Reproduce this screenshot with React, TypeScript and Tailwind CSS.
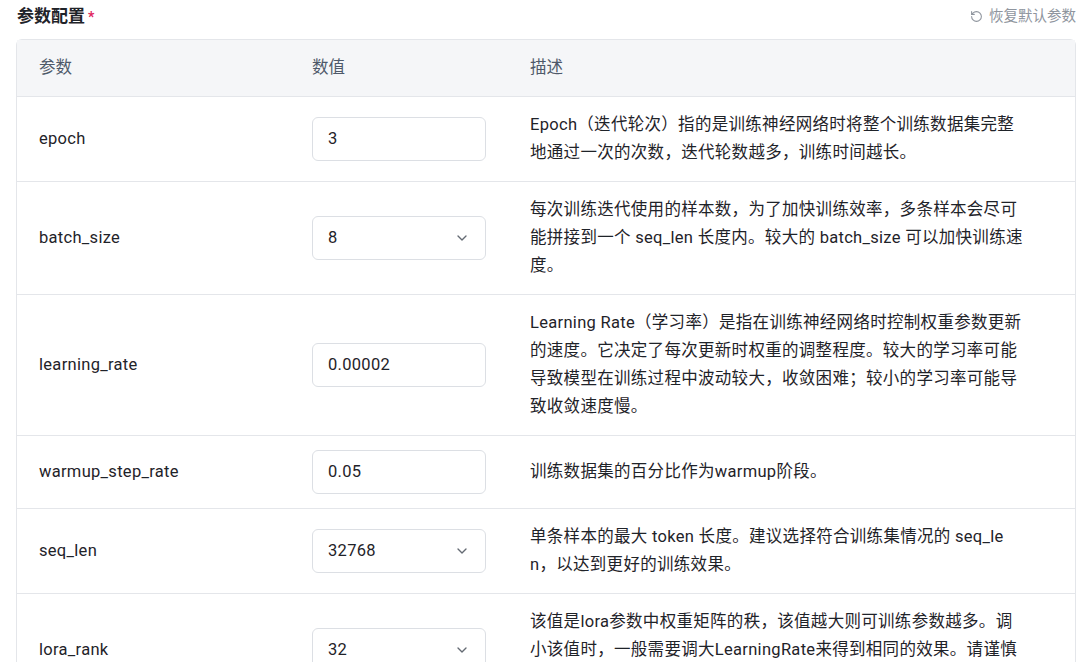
import { ChevronDown, RotateCw } from 'lucide-react';

type Row = { name: string; value: string; select?: boolean; desc: string[] };

const rows: Row[] = [
  { name: 'epoch', value: '3', desc: ['Epoch（迭代轮次）指的是训练神经网络时将整个训练数据集完整', '地通过一次的次数，迭代轮数越多，训练时间越长。'] },
  { name: 'batch_size', value: '8', select: true, desc: ['每次训练迭代使用的样本数，为了加快训练效率，多条样本会尽可', '能拼接到一个 seq_len 长度内。较大的 batch_size 可以加快训练速', '度。'] },
  { name: 'learning_rate', value: '0.00002', desc: ['Learning Rate（学习率）是指在训练神经网络时控制权重参数更新', '的速度。它决定了每次更新时权重的调整程度。较大的学习率可能', '导致模型在训练过程中波动较大，收敛困难；较小的学习率可能导', '致收敛速度慢。'] },
  { name: 'warmup_step_rate', value: '0.05', desc: ['训练数据集的百分比作为warmup阶段。'] },
  { name: 'seq_len', value: '32768', select: true, desc: ['单条样本的最大 token 长度。建议选择符合训练集情况的 seq_le', 'n，以达到更好的训练效果。'] },
  { name: 'lora_rank', value: '32', select: true, desc: ['该值是lora参数中权重矩阵的秩，该值越大则可训练参数越多。调', '小该值时，一般需要调大LearningRate来得到相同的效果。请谨慎', '调整。'] },
];

const font = { fontFamily: 'Roboto, "Noto Sans CJK SC", sans-serif' };

export default function App() {
  return (
    <div className="h-[662px] w-[1080px] overflow-hidden bg-white text-[#1f2329]" style={font}>
      <div className="flex items-center justify-between pl-[17px] pr-[4px] pt-[3px]">
        <span className="text-[17px] font-bold leading-[26px]">参数配置<span className="ml-[3px] text-[14px] text-[#e0245e]">*</span></span>
        <span className="flex items-center gap-[6px] text-[14.5px] text-[#8f959e]">
          <RotateCw size={13} className="-scale-x-100" />恢复默认参数
        </span>
      </div>
      <div className="ml-[16px] mr-[4px] mt-[9px] rounded-t-[6px] border border-b-0 border-[#e4e6ea]">
        <div className="grid h-[56px] grid-cols-[273px_218px_1fr] items-center bg-[#f5f6f8] text-[16.5px] text-[#4e5969]">
          <div className="px-[22px]">参数</div>
          <div className="px-[22px]">数值</div>
          <div className="px-[22px]">描述</div>
        </div>
        {rows.map((r) => (
          <div key={r.name} className="grid grid-cols-[273px_218px_1fr] items-center border-t border-[#e4e6ea] py-[14px] text-[16.5px] tracking-[0.3px]">
            <div className="px-[22px]">{r.name}</div>
            <div className="px-[22px]">
              <div className="flex h-[44px] w-[174px] items-center justify-between rounded-[6px] border border-[#dcdfe4] px-[15px]">
                <span>{r.value}</span>
                {r.select && <ChevronDown size={16} className="text-[#646a73]" />}
              </div>
            </div>
            <div className="pl-[22px] leading-[28px]">
              {r.desc.map((l, i) => (
                <div key={i} className="whitespace-nowrap">{l}</div>
              ))}
            </div>
          </div>
        ))}
      </div>
    </div>
  );
}
